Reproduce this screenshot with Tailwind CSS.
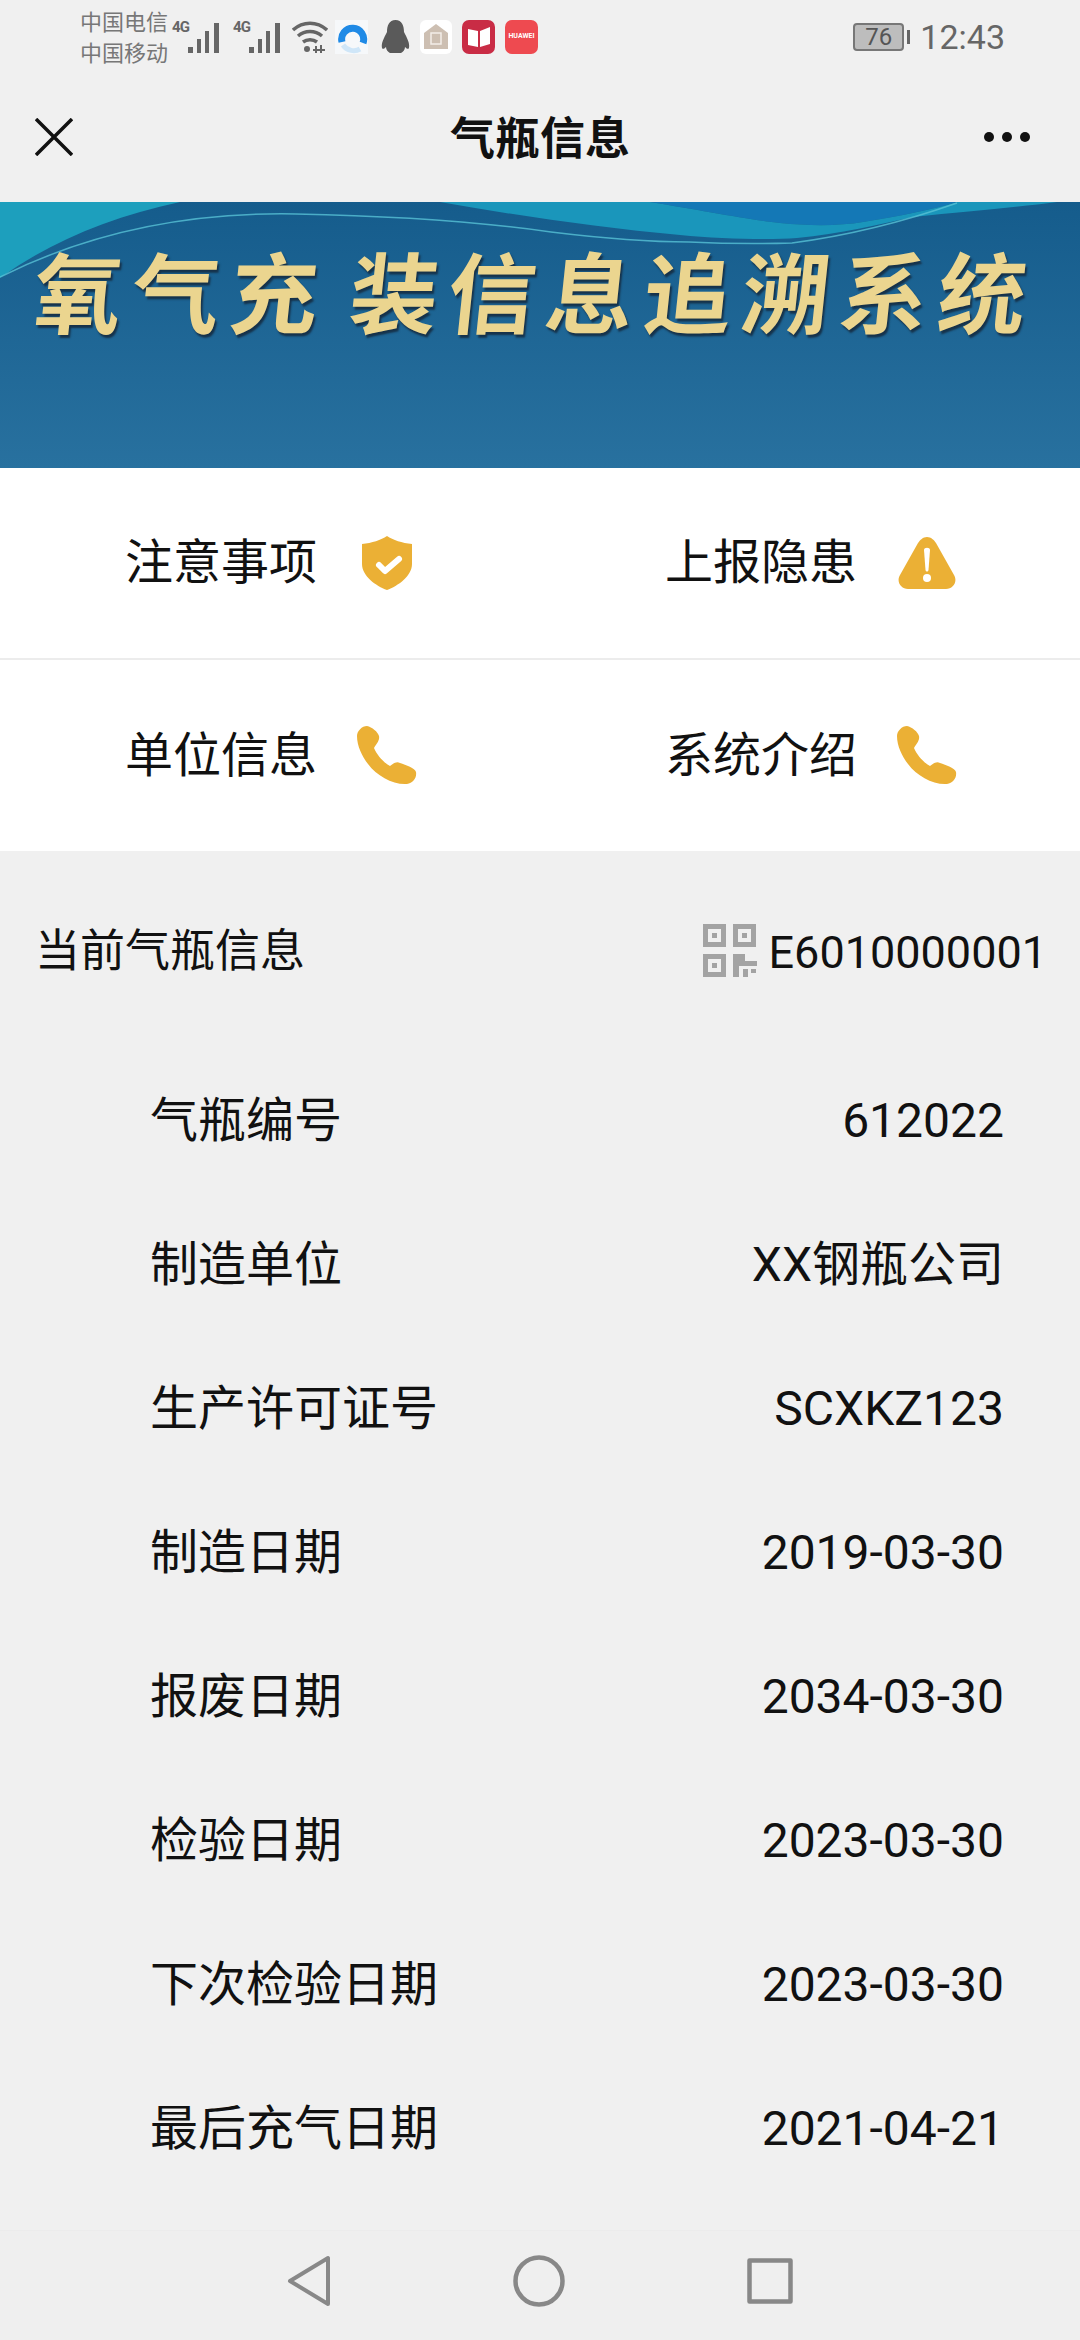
<!DOCTYPE html>
<html lang="zh-CN">
<head>
  <meta charset="utf-8" />
  <title>气瓶信息</title>
  <script src="https://cdn.jsdelivr.net/npm/@tailwindcss/browser@4"></script>
</head>
<body class="bg-[#f0f0f0] font-['Roboto','Noto_Sans_CJK_SC',sans-serif] text-[#111]">
  <div class="w-[1080px] h-[2340px] flex flex-col overflow-hidden">

    <!-- status bar -->
    <div class="h-[70px] flex items-center pl-[80px] pr-[75px] pt-[3px] text-[#666]">
      <div class="w-[90px] text-[22px] leading-[31px] text-[#777] pt-[3px]">
        <div>中国电信</div>
        <div>中国移动</div>
      </div>
      <div class="w-[52px] h-[34px] relative">
        <span class="absolute left-[2px] top-0 text-[15px] leading-[14px] font-bold tracking-tighter">4G</span>
        <svg class="absolute left-[18px] top-[2px]" width="32" height="32" viewBox="0 0 32 32" fill="#666"><rect x="0" y="25" width="5" height="6"/><rect x="9" y="17" width="4" height="14"/><rect x="17" y="9" width="4" height="22"/><rect x="26" y="1" width="5" height="30"/></svg>
      </div>
      <div class="w-[52px] h-[34px] relative ml-[9px]">
        <span class="absolute left-[2px] top-0 text-[15px] leading-[14px] font-bold tracking-tighter">4G</span>
        <svg class="absolute left-[18px] top-[2px]" width="32" height="32" viewBox="0 0 32 32" fill="#666"><rect x="0" y="25" width="5" height="6"/><rect x="9" y="17" width="4" height="14"/><rect x="17" y="9" width="4" height="22"/><rect x="26" y="1" width="5" height="30"/></svg>
      </div>
      <svg class="ml-[9px]" width="36" height="32" viewBox="0 0 36 32" fill="none" stroke="#666" stroke-width="3.500"><path d="M1 9 C11 0 25 0 35 9"/><path d="M6 15 C13 9 23 9 30 15"/><path d="M11 21 C15 18 21 18 25 21"/><circle cx="15" cy="28" r="3" fill="#666" stroke="none"/><path d="M24 25 V32 M29 24 V32 M21 29 H33" stroke-width="2"/></svg>
      <svg class="ml-[7px]" width="33" height="34" viewBox="0 0 33 34"><rect width="33" height="34" fill="#f6f8fa"/><path d="M7 22 A11 11 0 1 1 28 23" fill="none" stroke="#1f8ae6" stroke-width="7"/><path d="M8 25 C12 31 20 32 25 29" fill="none" stroke="#cfe6f8" stroke-width="5"/></svg>
      <svg class="ml-[13px]" width="29" height="34" viewBox="0 0 29 34" fill="#5a5a5a"><path d="M14.500 0 C21 0 23 6 23 12 C26 18 29 23 28 28 C27 30 25 28 24 27 C24 30 22 32 20 33 H9 C7 32 5 30 5 27 C4 28 2 30 1 28 C0 23 3 18 6 12 C6 6 8 0 14.500 0 Z"/></svg>
      <div class="ml-[10px] w-[32px] h-[34px] bg-white rounded-[6px] flex items-center justify-center">
        <svg width="24" height="25" viewBox="0 0 24 25" fill="#cdbfb2"><path d="M12 0 L24 9 V25 H0 V9 Z"/><rect x="7" y="9" width="10" height="11" fill="none" stroke="#f3eee9" stroke-width="1.500"/></svg>
      </div>
      <div class="ml-[10px] w-[33px] h-[34px] rounded-[7px] bg-[#c92c45] flex items-center justify-center">
        <svg width="24" height="22" viewBox="0 0 24 22" fill="#fff"><path d="M1 3 L11 5 V21 L1 19 Z"/><path d="M13 5 L23 1 V18 L13 21 Z"/></svg>
      </div>
      <div class="ml-[10px] w-[33px] h-[34px] rounded-[7px] bg-[#ee4a50] flex items-center justify-center text-white text-[7px] font-bold overflow-hidden">HUAWEI</div>

      <div class="ml-auto flex items-center">
        <div class="w-[51px] h-[28px] rounded-[4px] border-2 border-[#777] bg-[#bdbdbd] text-[24px] leading-[24px] text-center text-[#555]">76</div>
        <div class="w-[3px] h-[14px] bg-[#666] ml-[3px]"></div>
        <div class="ml-[10px] text-[34px] leading-none text-[#666]">12:43</div>
      </div>
    </div>

    <!-- nav -->
    <div class="h-[132px] flex items-center justify-between pl-[35px] pr-[50px] pt-[2px] relative">
      <svg width="38" height="38" viewBox="0 0 38 38" stroke="#111" stroke-width="3.500"><path d="M1 1 L37 37 M37 1 L1 37"/></svg>
      <div class="absolute inset-x-0 pt-[4px] text-center text-[45px] font-bold leading-none">气瓶信息</div>
      <div class="flex gap-[8px]">
        <span class="w-[10px] h-[10px] rounded-full bg-[#111]"></span>
        <span class="w-[10px] h-[10px] rounded-full bg-[#111]"></span>
        <span class="w-[10px] h-[10px] rounded-full bg-[#111]"></span>
      </div>
    </div>

    <!-- banner -->
    <div class="h-[266px] relative overflow-hidden bg-gradient-to-b from-[#155c8c] to-[#28719f]">
      <svg class="absolute inset-0" width="1080" height="266" viewBox="0 0 1080 266">
        <path d="M0 0 H180 C110 15 50 40 0 76 Z" fill="#1d9fbd"/>
        <path d="M650 0 C700 8 750 18 780 21 C810 24 840 24 863 20 C900 14 930 8 957 0 Z" fill="#1478b6"/>
        <path d="M440 0 C520 14 600 26 680 33 C720 37 770 38 797 36 C840 32 880 22 913 15 C970 9 1020 5 1057 0 H957 C930 8 900 14 863 20 C840 24 810 24 780 21 C750 18 700 8 650 0 Z" fill="#1a96bb"/>
        <path d="M0 75 C90 30 190 10 296 12 C400 14 480 20 551 30 C600 36 650 40 689 40 C730 42 760 42 792 41 C860 32 920 14 957 1" fill="none" stroke="#58c2d6" stroke-width="1.500" stroke-opacity="0.8"/>
      </svg>
      <div class="relative flex h-[190px] items-center pl-[34px] -skew-x-6 text-[88px] leading-none font-bold tracking-[10px] text-[#ebd58f] [text-shadow:2px_3px_2px_#16324a]">
        <span class="mr-[22px]">氧气充</span><span>装信息追溯系统</span>
      </div>
    </div>

    <!-- shortcuts -->
    <div class="bg-white">
      <div class="h-[192px] grid grid-cols-2 border-b-2 border-[#ececec]">
        <div class="flex items-center pl-[125px] text-[48px]">
          <span class="w-[237px]">注意事项</span>
          <svg width="50" height="54" viewBox="0 0 50 54"><path d="M25 0 C31 4 40 7 50 8 V28 C50 40 36 50 25 54 C14 50 0 40 0 28 V8 C10 7 19 4 25 0 Z" fill="#ebb035"/><path d="M17 29 L23 35 L37 23" fill="none" stroke="#fff" stroke-width="6" stroke-linecap="round" stroke-linejoin="round"/></svg>
        </div>
        <div class="flex items-center pl-[125px] text-[48px]">
          <span class="w-[233px]">上报隐患</span>
          <svg width="58" height="52" viewBox="0 0 58 52"><path d="M29 0 C33 0 36 3 38 6 L56 38 C60 45 55 52 48 52 H10 C3 52 -2 45 2 38 L20 6 C22 3 25 0 29 0 Z" fill="#ebb035"/><path d="M26 13 C26 10 32 10 32 13 L30.500 33 C30 35 28 35 27.500 33 Z" fill="#fff"/><circle cx="29" cy="41" r="4" fill="#fff"/></svg>
        </div>
      </div>
      <div class="h-[191px] grid grid-cols-2">
        <div class="flex items-center pl-[125px] text-[48px]">
          <span class="w-[232px]">单位信息</span>
          <svg width="60" height="59" viewBox="0 0 60 59"><path d="M10 0 C15 1 21 6 22 10 C23 15 19 18 17 22 C20 29 26 36 33 40 C36 38 39 35 43 37 C49 39 58 42 59 46 C60 52 56 57 50 58 C36 59 20 50 11 38 C5 30 0 20 0 10 C0 5 5 0 10 0 Z" fill="#ebb035"/></svg>
        </div>
        <div class="flex items-center pl-[125px] text-[48px]">
          <span class="w-[232px]">系统介绍</span>
          <svg width="60" height="59" viewBox="0 0 60 59"><path d="M10 0 C15 1 21 6 22 10 C23 15 19 18 17 22 C20 29 26 36 33 40 C36 38 39 35 43 37 C49 39 58 42 59 46 C60 52 56 57 50 58 C36 59 20 50 11 38 C5 30 0 20 0 10 C0 5 5 0 10 0 Z" fill="#ebb035"/></svg>
        </div>
      </div>
    </div>

    <!-- current cylinder -->
    <div class="h-[198px] shrink-0 flex justify-between pl-[35px] pr-[33px] pt-[73px]">
      <div class="text-[45px] leading-[56px]">当前气瓶信息</div>
      <div class="flex items-center h-[56px] text-[45px] leading-none">
        <svg class="mr-[12px] -mt-[3px]" width="54" height="53" viewBox="0 0 54 53" fill="#a3a3a3">
          <path fill-rule="evenodd" d="M0 0 H23 V23 H0 Z M5 5 V18 H18 V5 Z M30 0 H53 V23 H30 Z M35 5 V18 H48 V5 Z M0 30 H23 V53 H0 Z M5 35 V48 H18 V35 Z"/>
          <rect x="9" y="9" width="5" height="5"/><rect x="39" y="9" width="5" height="5"/><rect x="9" y="39" width="5" height="5"/>
          <path d="M30 30 H42 V37 H54 V42 H36 V53 H30 Z M40 45 H45 V53 H40 Z M48 45 H53 V49 H48 Z"/>
        </svg>
        E6010000001
      </div>
    </div>

    <!-- rows -->
    <div class="pl-[150px] pr-[76px] text-[48px]">
      <div class="h-[144px] flex items-center justify-between"><span>气瓶编号</span><span>612022</span></div>
      <div class="h-[144px] flex items-center justify-between"><span>制造单位</span><span>XX钢瓶公司</span></div>
      <div class="h-[144px] flex items-center justify-between"><span>生产许可证号</span><span>SCXKZ123</span></div>
      <div class="h-[144px] flex items-center justify-between"><span>制造日期</span><span>2019-03-30</span></div>
      <div class="h-[144px] flex items-center justify-between"><span>报废日期</span><span>2034-03-30</span></div>
      <div class="h-[144px] flex items-center justify-between"><span>检验日期</span><span>2023-03-30</span></div>
      <div class="h-[144px] flex items-center justify-between"><span>下次检验日期</span><span>2023-03-30</span></div>
      <div class="h-[144px] flex items-center justify-between"><span>最后充气日期</span><span>2021-04-21</span></div>
    </div>

    <!-- system nav -->
    <div class="mt-auto h-[110px] flex items-center justify-center gap-[182px] pb-[10px] bg-[#efefef] border-t border-[#ececec]">
      <svg width="44" height="52" viewBox="0 0 44 52" fill="none" stroke="#888" stroke-width="4" stroke-linejoin="round"><path d="M41 3 V49 L3 26 Z"/></svg>
      <svg width="52" height="52" viewBox="0 0 52 52" fill="none" stroke="#888" stroke-width="4.500"><circle cx="26" cy="26" r="23.500"/></svg>
      <svg width="46" height="46" viewBox="0 0 46 46" fill="none" stroke="#888" stroke-width="4.500" stroke-linejoin="round"><rect x="2.500" y="2.500" width="41" height="41"/></svg>
    </div>
  </div>
</body>
</html>
